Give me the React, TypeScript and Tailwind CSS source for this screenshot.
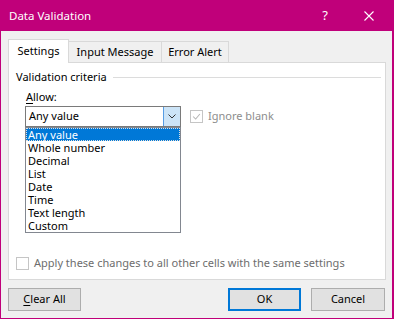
import React from 'react';

const font = { fontFamily: '"Noto Sans", "Liberation Sans", sans-serif' };

const options = ['Any value', 'Whole number', 'Decimal', 'List', 'Date', 'Time', 'Text length', 'Custom'];

const Check = ({ className }: { className?: string }) => (
  <svg viewBox="0 0 13 13" className={className}>
    <path d="M2.5 6.5 L5.5 9.5 L10.5 3.5" fill="none" stroke="currentColor" strokeWidth="1.2" />
  </svg>
);

export default function App() {
  return (
    <div
      className="w-[394px] h-[319px] bg-[#c0007a] pl-[1px] pr-[2px] pb-[1px] flex flex-col text-[11px] text-black overflow-hidden"
      style={font}
    >
      {/* Title bar */}
      <div className="h-[31px] flex items-center text-white shrink-0">
        <span className="ml-[8px] text-[11.5px]">Data Validation</span>
        <span className="ml-auto mr-[36px] text-[13px] leading-none">?</span>
        <svg viewBox="0 0 10 10" className="w-[10px] h-[10px] mr-[18px]">
          <path d="M0.5 0.5 L9.5 9.5 M9.5 0.5 L0.5 9.5" stroke="white" strokeWidth="1.1" />
        </svg>
      </div>

      <div className="flex-1 bg-[#f0f0f0] flex flex-col px-[7px]">
        {/* Tabs */}
        <div className="flex items-end h-[24px] mt-[7px] relative z-10">
          <div className="w-[61px] h-[24px] bg-white border border-b-0 border-[#d9d9d9] flex items-center justify-center -mb-[1px]">
            Settings
          </div>
          <div className="w-[93px] h-[21px] border border-l-0 border-b-0 border-[#d9d9d9] flex items-center justify-center">
            Input Message
          </div>
          <div className="w-[67px] h-[21px] border border-l-0 border-b-0 border-[#d9d9d9] flex items-center justify-center">
            Error Alert
          </div>
        </div>

        {/* Panel */}
        <div className="w-[378px] h-[218px] bg-white border border-[#d9d9d9] relative flex flex-col">
          <div className="flex items-center mt-[6px] ml-[7px] mr-[4px] h-[16px]">
            <span className="leading-[16px]">Validation criteria</span>
            <div className="flex-1 h-px bg-[#dcdcdc] ml-[6px]" />
          </div>

          <div className="ml-[17px] mt-[4px] leading-[16px]">
            <span className="underline underline-offset-2">A</span>llow:
          </div>

          <div className="flex items-center mt-[1px] ml-[16px]">
            <div className="w-[156px] h-[21px] border border-[#7a7a7a] flex items-center">
              <span className="pl-[3px] flex-1">Any value</span>
              <div className="w-[17px] h-[19px] bg-[#cce4f7] border-l border-[#569de5] flex items-center justify-center">
                <svg viewBox="0 0 8 5" className="w-[8px] h-[5px]">
                  <path d="M0.5 0.5 L4 4 L7.5 0.5" fill="none" stroke="#333" strokeWidth="1" />
                </svg>
              </div>
            </div>
            <div className="ml-[9px] w-[13px] h-[13px] border border-[#c5c5c5] text-[#b5b5b5] flex items-center justify-center">
              <Check className="w-[11px] h-[11px]" />
            </div>
            <span className="ml-[5px] text-[#8d8d8d]">Ignore blank</span>
          </div>

          <div className="flex-1" />

          <div className="flex items-center ml-[7px] mb-[8px] h-[16px]">
            <div className="w-[13px] h-[13px] border border-[#c5c5c5] bg-white" />
            <span className="ml-[5px] text-[#6d6d6d]">Apply these changes to all other cells with the same settings</span>
          </div>

          {/* Dropdown list */}
          <div className="absolute left-[16px] top-[64px] w-[156px] h-[106px] bg-white border border-[#828790] flex flex-col">
            {options.map((o, i) => (
              <div
                key={o}
                className={
                  i === 0
                    ? 'h-[13px] leading-[13px] pl-[2px] bg-[#0078d7] text-white outline outline-1 outline-dotted outline-[#e0e0e0] -outline-offset-1'
                    : 'h-[13px] leading-[13px] pl-[2px]'
                }
              >
                {o}
              </div>
            ))}
          </div>
        </div>

        {/* Buttons */}
        <div className="flex items-center mt-[8px]">
          <button className="w-[73px] h-[23px] bg-[#e1e1e1] border border-[#adadad]">
            <span className="underline underline-offset-2">C</span>lear All
          </button>
          <button className="ml-auto w-[73px] h-[23px] bg-[#e1e1e1] border-2 border-[#0078d7]">OK</button>
          <button className="ml-[10px] w-[74px] h-[23px] bg-[#e1e1e1] border border-[#adadad]">Cancel</button>
        </div>
      </div>
    </div>
  );
}
